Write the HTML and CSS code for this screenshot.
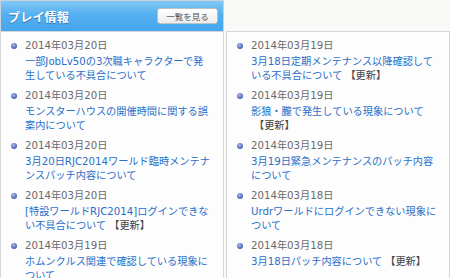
FILE: index.html
```html
<!DOCTYPE html>
<html lang="ja">
<head>
  <meta charset="UTF-8" />
  <title>プレイ情報</title>
  <link rel="stylesheet" href="styles.css">
</head>
<body>
  <div class="news">
    <div class="news-head">
      <h2>プレイ情報</h2>
      <a href="#" class="more">一覧を見る</a>
    </div>

    <ul class="news-list">
      <li>
        <div class="date">2014年03月20日</div>
        <a href="#">一部JobLv50の3次職キャラクターで発生している不具合について</a>
      </li>
      <li>
        <div class="date">2014年03月20日</div>
        <a href="#">モンスターハウスの開催時間に関する誤案内について</a>
      </li>
      <li>
        <div class="date">2014年03月20日</div>
        <a href="#">3月20日RJC2014ワールド臨時メンテナンスパッチ内容について</a>
      </li>
      <li>
        <div class="date">2014年03月20日</div>
        <a href="#">[特設ワールドRJC2014]ログインできない不具合について</a><span class="upd">【更新】</span>
      </li>
      <li>
        <div class="date">2014年03月19日</div>
        <a href="#">ホムンクルス関連で確認している現象について</a>
      </li>
    </ul>

    <ul class="news-list right">
      <li>
        <div class="date">2014年03月19日</div>
        <a href="#">3月18日定期メンテナンス以降確認している不具合について</a><span class="upd">【更新】</span>
      </li>
      <li>
        <div class="date">2014年03月19日</div>
        <a href="#">影狼・朧で発生している現象について</a><span class="upd">【更新】</span>
      </li>
      <li>
        <div class="date">2014年03月19日</div>
        <a href="#">3月19日緊急メンテナンスのパッチ内容について</a>
      </li>
      <li>
        <div class="date">2014年03月18日</div>
        <a href="#">Urdrワールドにログインできない現象について</a>
      </li>
      <li>
        <div class="date">2014年03月18日</div>
        <a href="#">3月18日パッチ内容について</a><span class="upd">【更新】</span>
      </li>
    </ul>
  </div>
</body>
</html>
```

FILE: styles.css
```css
* { box-sizing: border-box; }

body {
  margin: 0;
  background: #f9faf7;
  font-family: "DejaVu Sans", "Noto Sans CJK JP", sans-serif;
  font-size: 10.2px;
  overflow: hidden;
}

.news {
  display: grid;
  grid-template-columns: 224px 224px;
  grid-template-rows: 31px auto;
  column-gap: 2px;
}

.news-head {
  grid-column: 1;
  grid-row: 1;
  display: flex;
  align-items: center;
  justify-content: space-between;
  padding: 0 5px 0 7px;
  background: linear-gradient(#80c6f6, #55b0f0 45%, #45a5ec);
  border: 1px solid #c9d3dc;
  border-bottom: none;
}

.news-head h2 {
  margin: 0;
  color: #fff;
  font-family: "Noto Sans CJK JP", sans-serif;
  font-size: 12px;
  font-weight: bold;
  text-shadow: 0 1px 1px #2a6fae;
  letter-spacing: 0.2px;
}

.more {
  width: 61px;
  height: 16px;
  line-height: 14px;
  text-align: center;
  font-family: "Noto Sans CJK JP", sans-serif;
  font-size: 8.5px;
  color: #555;
  text-decoration: none;
  background: linear-gradient(#fff, #ececec);
  border: 1px solid #b9c0c6;
  border-radius: 3px;
}

.news-list {
  grid-row: 2;
  margin: 0;
  padding: 6px 11px 0 24px;
  list-style: none;
  height: 260px;
  background: #fdfdfd;
  border: 1px solid #d6d6d6;
}

.news-list.right {
  grid-column: 2;
}

.news-list li {
  position: relative;
  margin-bottom: 5px;
  line-height: 14px;
}

.date {
  position: relative;
  line-height: 16px;
  margin-bottom: 1px;
  color: #6a6a6a;
}

.date::before {
  content: "";
  position: absolute;
  left: -14px;
  top: 5px;
  width: 6px;
  height: 6px;
  border-radius: 50%;
  background: radial-gradient(circle at 40% 35%, #a9b8ec, #4b5fb3 70%);
}

.news-list a {
  color: #2a6fc9;
  text-decoration: none;
}

.upd {
  display: inline-block;
  margin-left: 3px;
  white-space: nowrap;
  color: #444;
}
```
